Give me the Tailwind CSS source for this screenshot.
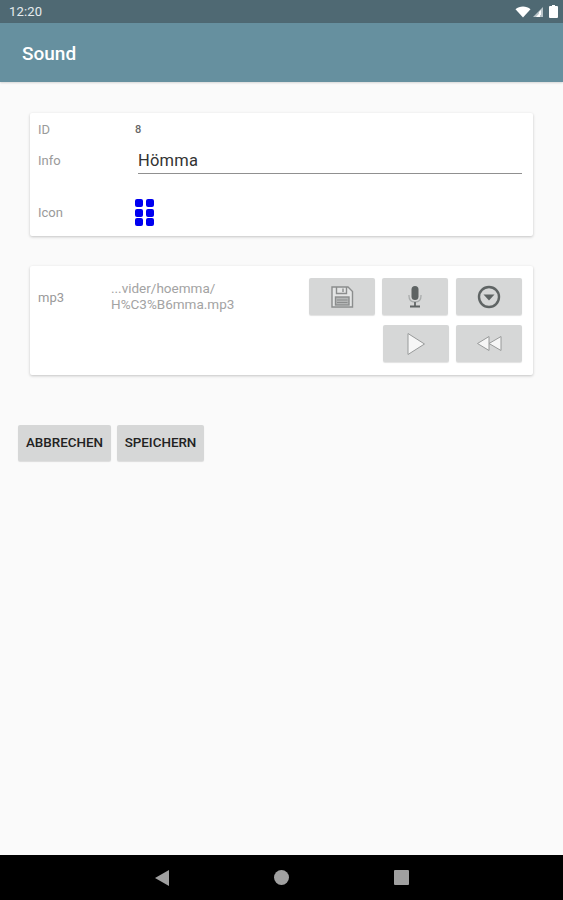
<!DOCTYPE html>
<html lang="de">
<head>
  <meta charset="UTF-8">
  <meta name="viewport" content="width=device-width, initial-scale=1.0">
  <title>Sound</title>
  <script src="https://cdn.jsdelivr.net/npm/@tailwindcss/browser@4"></script>
</head>
<body class="bg-[#fafafa] font-['Roboto',sans-serif] h-[900px] w-[563px] overflow-hidden flex flex-col">
  <!-- Statusleiste -->
  <div class="h-[23px] shrink-0 bg-[#4f6973] flex items-center justify-between pl-[9px] pr-[5px]">
    <span class="text-[#e6ecee] text-[13px] leading-none tracking-[0.2px]">12:20</span>
    <div class="flex items-center gap-[1px]">
      <svg width="16" height="12" viewBox="0 0 16 12"><path d="M0.5 3.2 C4.5 -0.4 11.5 -0.4 15.5 3.2 L8 11.5 Z" fill="#fff"/></svg>
      <svg width="12" height="12" viewBox="0 0 12 12"><path d="M11 1 L11 11 L1 11 Z" fill="#b9c5ca"/><path d="M7 6 L9 4 L9 9 L7 9 Z" fill="#fff"/><path d="M4 11 L8 6.5 L8 11 Z" fill="#fff"/></svg>
      <svg class="ml-[4px]" width="9" height="13" viewBox="0 0 9 13"><path d="M3 0 H6 V1 H8 Q9 1 9 2 V12 Q9 13 8 13 H1 Q0 13 0 12 V2 Q0 1 1 1 H3 Z" fill="#fff"/></svg>
    </div>
  </div>

  <!-- App-Leiste -->
  <div class="h-[59px] shrink-0 bg-[#66909f] flex items-center pl-[22px] pt-[2px] shadow-[0_1px_2px_rgba(0,0,0,0.15)]">
    <span class="text-white text-[19px] font-medium leading-none">Sound</span>
  </div>

  <div class="flex-1 flex flex-col">
    <!-- Karte Stammdaten -->
    <div class="ml-[30px] mr-[30px] mt-[31px] h-[123px] bg-white rounded-[2px] shadow-[0_1px_3px_rgba(0,0,0,0.22)] pl-[8px] pr-[11px] flex flex-col">
      <div class="flex items-center h-[16px] mt-[8px]">
        <span class="w-[97px] text-[13px] text-[#9a9a9a] leading-none">ID</span>
        <span class="text-[11px] font-medium text-[#666] leading-none pt-[1px]">8</span>
      </div>
      <div class="flex h-[31px] mt-[6px]">
        <span class="w-[100px] text-[13px] text-[#9a9a9a] leading-none pt-[11px]">Info</span>
        <div class="flex-1 border-b border-[#909090] text-[16.5px] text-[#333] leading-none pt-[10px] tracking-[0.2px]">Hömma</div>
      </div>
      <div class="flex items-center mt-[25px]">
        <span class="w-[97px] text-[13px] text-[#9a9a9a] leading-none">Icon</span>
        <div class="grid grid-cols-2 gap-x-[3px] gap-y-[1.5px] w-[19px]">
          <div class="size-[8px] bg-[#0000f0] rounded-[2px]"></div>
          <div class="size-[8px] bg-[#0000f0] rounded-[2px]"></div>
          <div class="size-[8px] bg-[#0000f0] rounded-[2px]"></div>
          <div class="size-[8px] bg-[#0000f0] rounded-[2px]"></div>
          <div class="size-[8px] bg-[#0000f0] rounded-[2px]"></div>
          <div class="size-[8px] bg-[#0000f0] rounded-[2px]"></div>
        </div>
      </div>
    </div>

    <!-- Karte mp3 -->
    <div class="ml-[30px] mr-[30px] mt-[30px] h-[109px] bg-white rounded-[2px] shadow-[0_1px_3px_rgba(0,0,0,0.22)] pl-[8px] pr-[11px] pt-[12px] flex">
      <span class="w-[73px] text-[13px] text-[#9a9a9a] leading-none pt-[13px]">mp3</span>
      <div class="w-[198px] text-[13.5px] text-[#a3a3a3] leading-[16px] pt-[2px]">...vider/hoemma/<br>H%C3%B6mma.mp3</div>
      <div class="flex-1 flex flex-col items-end gap-[10px]">
        <div class="flex gap-[7px]">
          <div class="w-[66px] h-[37px] bg-[#d6d7d7] rounded-[2px] flex items-center justify-center shadow-[0_1px_1px_rgba(0,0,0,0.12)]">
            <svg width="24" height="24" viewBox="0 0 24 24" fill="none" stroke="#8b8d8d" stroke-width="1.4"><path d="M2 2 H18 L22.5 6.5 V22 H2 Z" fill="#e4e5e5"/><path d="M6.5 2 V8.5 H16.5 V2"/><path d="M13 3.5 V7"/><rect x="5.5" y="12" width="13.5" height="8" fill="#b4b6b6"/><path d="M7 15 H17.5 M7 17.5 H17.5" stroke-width="1"/></svg>
          </div>
          <div class="w-[66px] h-[37px] mr-[1px] bg-[#d6d7d7] rounded-[2px] flex items-center justify-center shadow-[0_1px_1px_rgba(0,0,0,0.12)]">
            <svg width="16" height="24" viewBox="0 0 16 24"><rect x="4.5" y="1" width="7" height="14" rx="3.5" fill="#5e6363"/><path d="M2 10 V11 Q2 17 8 17 Q14 17 14 11 V10" fill="none" stroke="#a9acac" stroke-width="1.3"/><rect x="7" y="17" width="2" height="4" fill="#6d7171"/><rect x="3" y="20.5" width="10" height="2" fill="#5e6363"/></svg>
          </div>
          <div class="w-[66px] h-[37px] bg-[#d6d7d7] rounded-[2px] flex items-center justify-center shadow-[0_1px_1px_rgba(0,0,0,0.12)]">
            <svg width="24" height="24" viewBox="0 0 24 24"><circle cx="12" cy="12" r="10" fill="none" stroke="#5f6464" stroke-width="2.4"/><path d="M6.5 9.5 H17.5 L12 15.5 Z" fill="#5f6464"/></svg>
          </div>
        </div>
        <div class="flex gap-[7px]">
          <div class="w-[66px] h-[37px] bg-[#d6d7d7] rounded-[2px] flex items-center justify-center shadow-[0_1px_1px_rgba(0,0,0,0.12)]">
            <svg width="20" height="24" viewBox="0 0 20 24"><path d="M2 1.5 L18.5 12 L2 22.5 Z" fill="#f6f6f6" stroke="#989a9a" stroke-width="1"/></svg>
          </div>
          <div class="w-[66px] h-[37px] bg-[#d6d7d7] rounded-[2px] flex items-center justify-center shadow-[0_1px_1px_rgba(0,0,0,0.12)]">
            <svg width="26" height="17" viewBox="0 0 26 17"><path d="M13 1.5 V15.5 L1.5 8.5 Z" fill="#f6f6f6" stroke="#989a9a" stroke-width="1"/><path d="M25 1.5 V15.5 L13 8.5 Z" fill="#f6f6f6" stroke="#989a9a" stroke-width="1"/></svg>
          </div>
        </div>
      </div>
    </div>

    <!-- Aktionen -->
    <div class="flex gap-[6px] ml-[18px] mt-[50px]">
      <div class="w-[93px] h-[36px] bg-[#d6d7d7] rounded-[2px] flex items-center justify-center text-[13.4px] font-medium text-[#222] shadow-[0_1px_1px_rgba(0,0,0,0.12)]">ABBRECHEN</div>
      <div class="w-[87px] h-[36px] bg-[#d6d7d7] rounded-[2px] flex items-center justify-center text-[13.4px] font-medium text-[#222] shadow-[0_1px_1px_rgba(0,0,0,0.12)]">SPEICHERN</div>
    </div>
  </div>

  <!-- Navigationsleiste -->
  <div class="h-[45px] shrink-0 bg-black flex items-center">
    <div class="flex items-center w-full pl-[155px] gap-[105px]">
      <svg width="14" height="16" viewBox="0 0 14 16"><path d="M14 0 V16 L0 8 Z" fill="#a0a0a0"/></svg>
      <div class="size-[15px] rounded-full bg-[#a0a0a0]"></div>
      <div class="size-[15px] rounded-[1px] bg-[#a0a0a0]"></div>
    </div>
  </div>
</body>
</html>
